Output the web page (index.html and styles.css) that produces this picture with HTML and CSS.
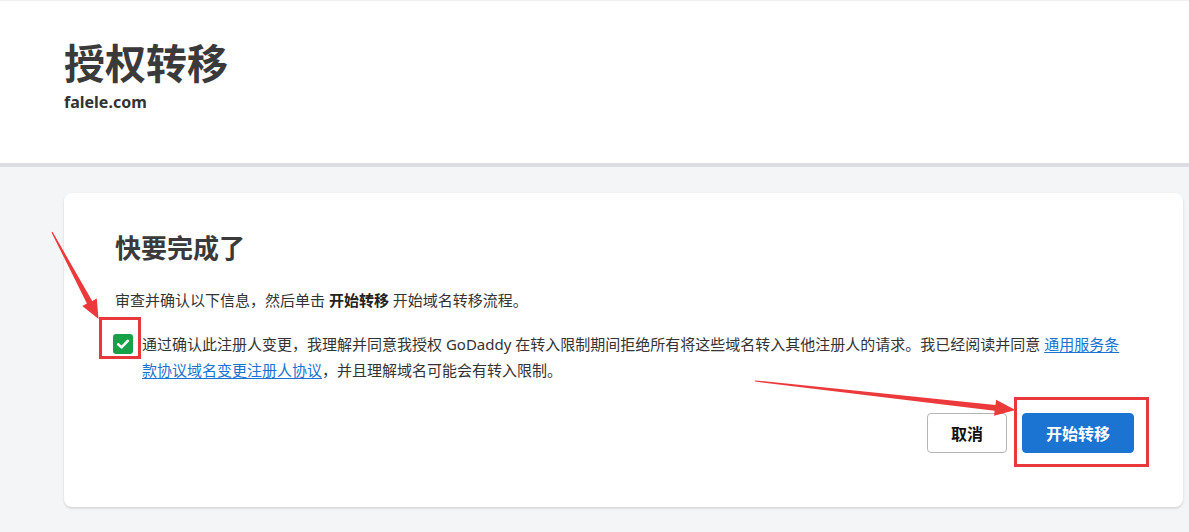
FILE: index.html
```html
<!DOCTYPE html>
<html lang="zh-CN">
<head>
<meta charset="utf-8">
<title>授权转移</title>
<link rel="stylesheet" href="styles.css">
</head>
<body>
<header class="page-header">
  <h1 class="title">授权转移</h1>
  <div class="domain">falele.com</div>
</header>
<main class="content">
  <section class="card">
    <h2 class="card-title">快要完成了</h2>
    <p class="intro">审查并确认以下信息，然后单击 <strong>开始转移</strong> 开始域名转移流程。</p>
    <div class="agree">
      <span class="checkbox">
        <svg viewBox="0 0 20 20" width="20" height="20"><path d="M5.2 10.3 L8.5 13.4 L14.8 6.9" fill="none" stroke="#fff" stroke-width="2.6" stroke-linecap="round" stroke-linejoin="round"/></svg>
      </span>
      <p class="agree-text">通过确认此注册人变更，我理解并同意我授权 GoDaddy 在转入限制期间拒绝所有将这些域名转入其他注册人的请求。我已经阅读并同意 <a href="#" class="link">通用服务条<br>款协议</a><a href="#" class="link">域名变更注册人协议</a>，并且理解域名可能会有转入限制。</p>
    </div>
    <div class="actions">
      <button class="btn btn-cancel">取消</button>
      <button class="btn btn-primary">开始转移</button>
    </div>
  </section>
</main>
<svg class="annotations" width="1189" height="532" viewBox="0 0 1189 532">
  <rect x="100.5" y="318.5" width="39" height="39" fill="none" stroke="#e8383b" stroke-width="3"/>
  <rect x="1015.5" y="398.5" width="132" height="67" fill="none" stroke="#e8383b" stroke-width="3"/>
  <polygon fill="#ec3a3c" points="51.5,232.4 52.5,231.8 92.2,300.9 96.8,298.4 98.5,319 82.3,305.9 86.9,303.4"/>
  <polygon fill="#ec3a3c" points="755,380.4 755,381.6 994.6,410.8 994.1,415.8 1015.5,410 996.1,399.8 995.5,405"/>
</svg>
</body>
</html>
```
FILE: styles.css
```css
* { box-sizing: border-box; }
html, body { margin: 0; padding: 0; }
body {
  width: 1189px;
  height: 532px;
  overflow: hidden;
  background: #f4f5f7;
  font-family: "Noto Sans", "Noto Sans CJK SC", sans-serif;
  color: #333;
  position: relative;
}
.page-header {
  background: #fff;
  height: 167px;
  border-top: 1px solid #eeeeee;
  border-bottom: 4px solid #dcdde0;
  padding: 41px 0 0 64px;
}
.title {
  margin: 0;
  font-size: 41px;
  line-height: 42px;
  font-weight: 700;
  color: #3a3a3a;
}
.domain {
  margin-top: 8px;
  font-size: 16px;
  line-height: 20px;
  font-weight: 700;
  color: #333;
}
.content {
  padding: 26px 6px 0 64px;
}
.card {
  background: #fff;
  border-radius: 8px;
  height: 314px;
  padding: 42px 50px 0 51px;
  box-shadow: 0 1px 3px rgba(0,0,0,0.10), 0 2px 2px rgba(0,0,0,0.05);
}
.card-title {
  margin: 0;
  font-size: 26px;
  line-height: 26px;
  font-weight: 700;
  color: #3a3a3a;
}
.intro {
  margin: 26px 0 0;
  font-size: 15px;
  line-height: 26px;
  color: #333;
}
.intro strong { font-weight: 700; color: #222; }
.agree {
  display: flex;
  align-items: flex-start;
  margin-top: 18px;
}
.checkbox {
  flex: 0 0 20px;
  width: 20px;
  height: 20px;
  margin: 3px 9px 0 -2px;
  background: #17a24a;
  border-radius: 3px;
  display: flex;
}
.agree-text {
  margin: 0;
  flex: 1;
  font-size: 15px;
  line-height: 26px;
  color: #333;
}
.link {
  color: #1a73d1;
  text-decoration: underline;
  text-underline-offset: 2px;
}
.actions {
  display: flex;
  justify-content: flex-end;
  gap: 15px;
  margin-top: 30px;
  margin-right: -1px;
}
.btn {
  height: 40px;
  font-family: "Noto Sans", "Noto Sans CJK SC", sans-serif;
  font-size: 16px;
  font-weight: 700;
  border-radius: 4px;
  cursor: pointer;
  padding: 0;
}
.btn-cancel {
  width: 80px;
  background: #fff;
  border: 1px solid #b5b5b5;
  color: #111;
}
.btn-primary {
  width: 112px;
  background: #1b74d2;
  border: 1px solid #1b74d2;
  color: #fff;
}
.annotations {
  position: absolute;
  left: 0;
  top: 0;
  pointer-events: none;
}
```
